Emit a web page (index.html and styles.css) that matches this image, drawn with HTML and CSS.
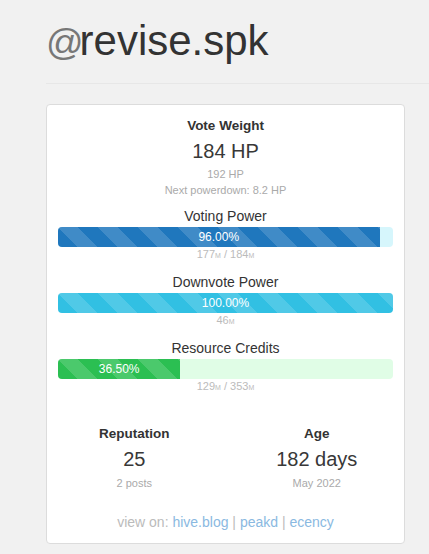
FILE: index.html
```html
<!DOCTYPE html>
<html>
<head>
<meta charset="utf-8">
<link rel="stylesheet" href="styles.css">
</head>
<body>
<div class="page">
  <h1 class="title"><span class="at">@</span>revise.spk</h1>
  <hr class="rule">
  <div class="card">
    <div class="vw-title">Vote Weight</div>
    <div class="big">184 HP</div>
    <div class="vw-sub first">192 HP</div>
    <div class="vw-sub">Next powerdown: 8.2 HP</div>

    <div class="meter first">
      <div class="meter-title">Voting Power</div>
      <div class="bar bar-blue"><div class="fill" style="width:96%">96.00%</div></div>
      <div class="meter-sub">177<span class="unit">M</span> / 184<span class="unit">M</span></div>
    </div>

    <div class="meter">
      <div class="meter-title">Downvote Power</div>
      <div class="bar bar-cyan"><div class="fill" style="width:100%">100.00%</div></div>
      <div class="meter-sub">46<span class="unit">M</span></div>
    </div>

    <div class="meter">
      <div class="meter-title">Resource Credits</div>
      <div class="bar bar-green"><div class="fill" style="width:36.5%">36.50%</div></div>
      <div class="meter-sub">129<span class="unit">M</span> / 353<span class="unit">M</span></div>
    </div>

    <div class="stats">
      <div class="stat">
        <div class="stat-title">Reputation</div>
        <div class="big">25</div>
        <div class="stat-sub">2 posts</div>
      </div>
      <div class="stat">
        <div class="stat-title">Age</div>
        <div class="big">182 days</div>
        <div class="stat-sub">May 2022</div>
      </div>
    </div>

    <div class="links">view on: <a href="#">hive.blog</a> <span class="sep">|</span> <a href="#">peakd</a> <span class="sep">|</span> <a href="#">ecency</a></div>
  </div>
</div>
</body>
</html>
```
FILE: styles.css
```css
html, body {
  margin: 0;
  padding: 0;
  background: #f1f1f1;
  font-family: "Liberation Sans", Arial, Helvetica, sans-serif;
  color: #333;
}

.page {
  padding-left: 46px;
  overflow: hidden;
}

.title {
  margin: 0;
  padding-top: 18.5px;
  font-size: 42px;
  line-height: 44px;
  font-weight: normal;
  color: #333;
}

.at {
  color: #777;
  font-size: 37px;
  line-height: 1;
  letter-spacing: -4px;
}

.rule {
  margin: 20.5px 0 0 0;
  border: 0;
  height: 1px;
  background: #e7e7e7;
}

.card {
  margin-top: 20px;
  width: 359px;
  box-sizing: border-box;
  background: #fff;
  border: 1px solid #dcdcdc;
  border-radius: 4px;
  padding: 11px 11px 11px;
  text-align: center;
}

.vw-title,
.stat-title {
  font-size: 13.5px;
  line-height: 20px;
  font-weight: bold;
  color: #333;
}

.big {
  margin-top: 3px;
  font-size: 20px;
  line-height: 24px;
  color: #383838;
}

.vw-sub,
.stat-sub {
  font-size: 11px;
  line-height: 16px;
  color: #aaa;
}

.vw-sub.first {
  margin-top: 3px;
}

.stat-sub {
  margin-top: 3.5px;
}

.meter {
  margin-top: 9px;
}

.meter.first {
  margin-top: 8px;
}

.meter-title {
  font-size: 14px;
  line-height: 20px;
  color: #333;
}

.bar {
  margin-top: 1px;
  height: 20px;
  display: flex;
  border-radius: 4px;
  overflow: hidden;
}

.fill {
  height: 20px;
  font-size: 12px;
  line-height: 20px;
  color: #fff;
  text-align: center;
  white-space: nowrap;
  background-image: linear-gradient(45deg,
    rgba(255,255,255,.15) 25%, transparent 25%,
    transparent 50%, rgba(255,255,255,.15) 50%,
    rgba(255,255,255,.15) 75%, transparent 75%, transparent);
  background-size: 40px 40px;
}

.bar-blue { background: #d6f6fc; }
.bar-blue .fill { background-color: #1f77bd; }

.bar-cyan { background: #d6f6fc; }
.bar-cyan .fill { background-color: #31c0e3; }

.bar-green { background: #e0fde6; }
.bar-green .fill { background-color: #2bbf52; }

.meter-sub {
  font-size: 11px;
  line-height: 15px;
  color: #bbb;
}

.unit {
  font-size: 7px;
}

.stats {
  margin: 29px -15px 0;
  display: grid;
  grid-template-columns: 1fr 1fr;
}

.links {
  margin-top: 21px;
  font-size: 14px;
  line-height: 20px;
  color: #bbb;
}

.links a {
  color: #8ab9e1;
  text-decoration: none;
}

.sep {
  color: #bbb;
}
```
